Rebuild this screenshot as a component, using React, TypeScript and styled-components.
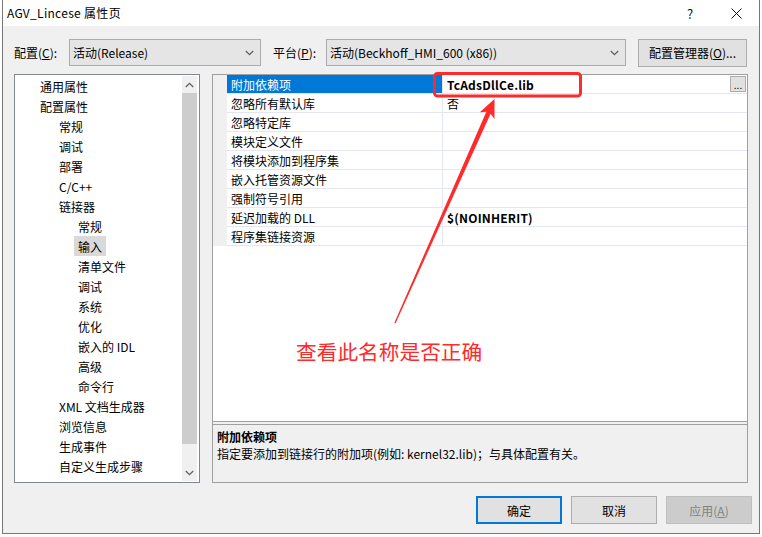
import React from "react";
import styled, { createGlobalStyle } from "styled-components";

const FONT = `"Noto Sans CJK SC", "Noto Sans", sans-serif`;

const Global = createGlobalStyle`
  html, body { margin: 0; padding: 0; background: #ffffff; }
  body { font-family: ${FONT}; font-size: 12px; color: #000; }
  * { box-sizing: border-box; }
`;

const Page = styled.div`
  position: relative;
  width: 762px;
  height: 537px;
  overflow: hidden;
`;

const Dialog = styled.div`
  margin-left: 2px;
  width: 758px;
  height: 534px;
  border-left: 1px solid #777;
  border-right: 1px solid #777;
  border-bottom: 1px solid #777;
  background: #f0f0f0;
  display: flex;
  flex-direction: column;
`;

const TitleBar = styled.div`
  height: 26px;
  background: #fff;
  display: flex;
  align-items: center;
  padding-left: 4px;
`;

const TitleText = styled.div`
  flex: 1;
  font-size: 12px;
  line-height: 26px;
  letter-spacing: 0.3px;
`;

const TitleBtn = styled.div`
  width: 46px;
  height: 26px;
  display: flex;
  align-items: center;
  justify-content: center;
  font-size: 13px;
  color: #111;
`;

const Body = styled.div`
  flex: 1;
  display: flex;
  flex-direction: column;
  padding: 13px 11px 0 11px;
`;

const Toolbar = styled.div`
  display: flex;
  align-items: center;
  height: 27px;
`;

const Label = styled.div<{ $w: number; $ml?: number }>`
  width: ${(p) => p.$w}px;
  margin-left: ${(p) => p.$ml ?? 0}px;
  white-space: nowrap;
`;

const Select = styled.div<{ $w: number }>`
  width: ${(p) => p.$w}px;
  height: 27px;
  background: #e5e5e5;
  border: 1px solid #acacac;
  display: flex;
  align-items: center;
  padding: 0 6px 0 3px;
`;

const SelectText = styled.div`
  flex: 1;
  white-space: nowrap;
`;

const PushButton = styled.div<{ $w: number; $ml?: number }>`
  width: ${(p) => p.$w}px;
  margin-left: ${(p) => p.$ml ?? 0}px;
  height: 28px;
  background: #e1e1e1;
  border: 1px solid #adadad;
  display: flex;
  align-items: center;
  justify-content: center;
  white-space: nowrap;
`;

const Content = styled.div`
  display: flex;
  margin-top: 8px;
  height: 409px;
`;

const TreePanel = styled.div`
  width: 186px;
  border: 1px solid #828790;
  background: #fff;
  display: flex;
`;

const TreeList = styled.div`
  flex: 1;
  padding-top: 1px;
  display: flex;
  flex-direction: column;
`;

const TreeRow = styled.div<{ $level: number }>`
  height: 20px;
  display: flex;
  align-items: stretch;
  padding-left: ${(p) => 25 + p.$level * 19}px;
  white-space: nowrap;
`;

const TreeLabel = styled.span<{ $selected?: boolean }>`
  display: flex;
  align-items: center;
  padding: 0 4px;
  margin-left: -4px;
  background: ${(p) => (p.$selected ? "#d9d9d9" : "transparent")};
`;

const ScrollBar = styled.div`
  width: 15px;
  margin: 1px 2px 1px 0;
  background: #f0f0f0;
  display: flex;
  flex-direction: column;
`;

const ScrollArrow = styled.div`
  height: 17px;
  display: flex;
  align-items: center;
  justify-content: center;
`;

const ScrollTrack = styled.div`
  flex: 1;
  display: flex;
  flex-direction: column;
`;

const Thumb = styled.div`
  height: 351px;
  background: #cdcdcd;
`;

const PropPanel = styled.div`
  margin-left: 12px;
  flex: 1;
  border: 1px solid #a0a0a0;
  display: flex;
  flex-direction: column;
`;

const Grid = styled.div`
  flex: 1;
  background: #fff;
  border-bottom: 1px solid #a0a0a0;
  display: flex;
  flex-direction: column;
`;

const PropRow = styled.div`
  height: 19px;
  display: grid;
  grid-template-columns: 14px 216px 1fr;
`;

const Margin = styled.div`
  background: #f0f0f0;
`;

const NameCell = styled.div<{ $selected?: boolean }>`
  display: flex;
  align-items: center;
  padding-left: 4px;
  border-bottom: 1px solid #e4e6f4;
  border-right: 1px solid #e4e6f4;
  background: ${(p) => (p.$selected ? "#0078d7" : "#fff")};
  color: ${(p) => (p.$selected ? "#fff" : "#000")};
  white-space: nowrap;
`;

const ValueCell = styled.div<{ $bold?: boolean }>`
  display: flex;
  align-items: center;
  padding-left: 4px;
  border-bottom: 1px solid #e4e6f4;
  font-weight: ${(p) => (p.$bold ? 700 : 400)};
  letter-spacing: ${(p) => (p.$bold ? "0.2px" : "0")};
  white-space: nowrap;
`;

const Ellipsis = styled.div`
  margin-left: auto;
  margin-right: 1px;
  width: 16px;
  height: 16px;
  background: #e1e1e1;
  border: 1px solid #adadad;
  font-size: 10px;
  font-weight: 400;
  letter-spacing: 0;
  display: flex;
  align-items: flex-end;
  justify-content: center;
  line-height: 12px;
`;

const Splitter = styled.div`
  height: 3px;
  background: #f0f0f0;
  border-bottom: 1px solid #a0a0a0;
`;

const Desc = styled.div`
  height: 57px;
  padding: 3px 0 0 4px;
  line-height: 17px;
`;

const DescTitle = styled.div`
  font-weight: 700;
`;

const Footer = styled.div`
  display: flex;
  justify-content: flex-end;
  gap: 9px;
  margin-top: 13px;
  margin-right: -4px;
`;

const DlgButton = styled.div<{ $variant?: "default" | "disabled" | "normal" }>`
  width: 86px;
  height: 28px;
  display: flex;
  align-items: center;
  justify-content: center;
  background: ${(p) => (p.$variant === "disabled" ? "#cccccc" : "#e1e1e1")};
  border: ${(p) =>
    p.$variant === "default"
      ? "2px solid #0078d7"
      : p.$variant === "disabled"
      ? "1px solid #bfbfbf"
      : "1px solid #adadad"};
  color: ${(p) => (p.$variant === "disabled" ? "#838383" : "#000")};
`;

const Overlay = styled.svg`
  position: absolute;
  left: 0;
  top: 0;
  pointer-events: none;
`;

const Note = styled.div`
  position: absolute;
  left: 296px;
  top: 337px;
  font-size: 20.7px;
  line-height: 28px;
  color: #ff2a2a;
  white-space: nowrap;
`;

const Chevron = ({ up }: { up?: boolean }) => (
  <svg width="9" height="6" viewBox="0 0 9 6">
    <path
      d={up ? "M0.8 5 L4.5 1.3 L8.2 5" : "M0.8 1 L4.5 4.7 L8.2 1"}
      fill="none"
      stroke="#606060"
      strokeWidth="1.3"
    />
  </svg>
);

const tree: { t: string; l: number; s?: boolean }[] = [
  { t: "通用属性", l: 0 },
  { t: "配置属性", l: 0 },
  { t: "常规", l: 1 },
  { t: "调试", l: 1 },
  { t: "部署", l: 1 },
  { t: "C/C++", l: 1 },
  { t: "链接器", l: 1 },
  { t: "常规", l: 2 },
  { t: "输入", l: 2, s: true },
  { t: "清单文件", l: 2 },
  { t: "调试", l: 2 },
  { t: "系统", l: 2 },
  { t: "优化", l: 2 },
  { t: "嵌入的 IDL", l: 2 },
  { t: "高级", l: 2 },
  { t: "命令行", l: 2 },
  { t: "XML 文档生成器", l: 1 },
  { t: "浏览信息", l: 1 },
  { t: "生成事件", l: 1 },
  { t: "自定义生成步骤", l: 1 },
];

const props: { n: string; v?: string; bold?: boolean; sel?: boolean }[] = [
  { n: "附加依赖项", v: "TcAdsDllCe.lib", bold: true, sel: true },
  { n: "忽略所有默认库", v: "否" },
  { n: "忽略特定库" },
  { n: "模块定义文件" },
  { n: "将模块添加到程序集" },
  { n: "嵌入托管资源文件" },
  { n: "强制符号引用" },
  { n: "延迟加载的 DLL", v: "$(NOINHERIT)", bold: true },
  { n: "程序集链接资源" },
];

export default function App() {
  return (
    <Page>
      <Global />
      <Dialog>
        <TitleBar>
          <TitleText>AGV_Lincese 属性页</TitleText>
          <TitleBtn>?</TitleBtn>
          <TitleBtn>
            <svg width="11" height="11" viewBox="0 0 11 11">
              <path d="M0.5 0.5 L10.5 10.5 M10.5 0.5 L0.5 10.5" stroke="#111" strokeWidth="1" />
            </svg>
          </TitleBtn>
        </TitleBar>
        <Body>
          <Toolbar>
            <Label $w={55}>
              配置(<u>C</u>):
            </Label>
            <Select $w={192}>
              <SelectText>活动(Release)</SelectText>
              <Chevron />
            </Select>
            <Label $w={53} $ml={12}>
              平台(<u>P</u>):
            </Label>
            <Select $w={300}>
              <SelectText>活动(Beckhoff_HMI_600 (x86))</SelectText>
              <Chevron />
            </Select>
            <PushButton $w={109} $ml={12}>
              配置管理器(<u>O</u>)...
            </PushButton>
          </Toolbar>
          <Content>
            <TreePanel>
              <TreeList>
                {tree.map((r, i) => (
                  <TreeRow key={i} $level={r.l}>
                    <TreeLabel $selected={r.s}>{r.t}</TreeLabel>
                  </TreeRow>
                ))}
              </TreeList>
              <ScrollBar>
                <ScrollArrow>
                  <Chevron up />
                </ScrollArrow>
                <ScrollTrack>
                  <Thumb />
                </ScrollTrack>
                <ScrollArrow>
                  <Chevron />
                </ScrollArrow>
              </ScrollBar>
            </TreePanel>
            <PropPanel>
              <Grid>
                {props.map((p, i) => (
                  <PropRow key={i}>
                    <Margin />
                    <NameCell $selected={p.sel}>{p.n}</NameCell>
                    <ValueCell $bold={p.bold}>
                      {p.v}
                      {p.sel && <Ellipsis>...</Ellipsis>}
                    </ValueCell>
                  </PropRow>
                ))}
              </Grid>
              <Splitter />
              <Desc>
                <DescTitle>附加依赖项</DescTitle>
                <div>指定要添加到链接行的附加项(例如: kernel32.lib)；与具体配置有关。</div>
              </Desc>
            </PropPanel>
          </Content>
          <Footer>
            <DlgButton $variant="default">确定</DlgButton>
            <DlgButton $variant="normal">取消</DlgButton>
            <DlgButton $variant="disabled">
              应用(<u>A</u>)
            </DlgButton>
          </Footer>
        </Body>
      </Dialog>
      <Overlay width="762" height="537" viewBox="0 0 762 537">
        <rect x="434.5" y="73.5" width="146" height="22.5" rx="3" fill="none" stroke="#ff2a2a" strokeWidth="3" />
        <polygon
          points="494.5,99 494.5,119 490.6,113.8 395.6,323.2 394.4,322.8 486.3,111.8 479.8,112.3"
          fill="#ff2a2a"
        />
      </Overlay>
      <Note>查看此名称是否正确</Note>
    </Page>
  );
}
